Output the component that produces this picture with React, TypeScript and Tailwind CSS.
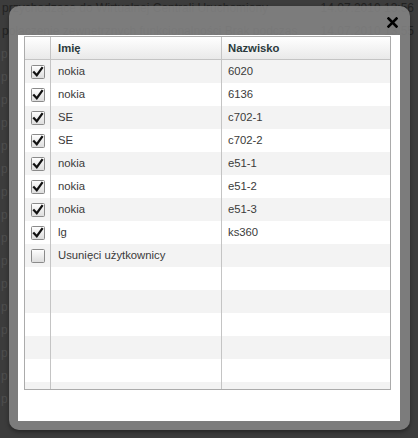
import React from "react";

const rows: [string, string, boolean][] = [
  ["nokia", "6020", true],
  ["nokia", "6136", true],
  ["SE", "c702-1", true],
  ["SE", "c702-2", true],
  ["nokia", "e51-1", true],
  ["nokia", "e51-2", true],
  ["nokia", "e51-3", true],
  ["lg", "ks360", true],
  ["Usunięci użytkownicy", "", false],
];

const topLines = [
  ["przychodzące do Wirtualnej Centrali   Uruchomiony", "14.07.2010 13:56"],
  ["połączenie zewnętrznych funkcjonalności   Brak podczas", "14.07.2010 13:55"],
];

function Check({ checked }: { checked: boolean }) {
  return (
    <svg width="14" height="14" viewBox="0 0 14 14">
      <defs>
        <linearGradient id="cbg" x1="0" y1="0" x2="0" y2="1">
          <stop offset="0" stopColor="#ffffff" />
          <stop offset="1" stopColor="#dcdcdc" />
        </linearGradient>
      </defs>
      <rect x="0.5" y="0.5" width="13" height="13" rx="1" fill="url(#cbg)" stroke="#8a8a8a" />
      {checked && (
        <path d="M3 7.2 L5.8 10.2 L11 3" fill="none" stroke="#111" strokeWidth="2.2" strokeLinecap="square" strokeLinejoin="miter" />
      )}
    </svg>
  );
}

export default function App() {
  const bodyRows = Array.from({ length: 16 }, (_, i) => rows[i] ?? null);
  return (
    <div
      className="relative w-[418px] h-[438px] overflow-hidden bg-[#3c3c3c] text-[11.3px]"
      style={{ fontFamily: '"Liberation Sans", Arial, sans-serif' }}
    >
      <div className="flex flex-col -mt-[4px]">
        {topLines.map((l, i) => (
          <div key={i} className="h-[23px] flex items-center gap-[14px] text-[#222] text-[12px] pl-[2px] whitespace-nowrap">
            <span>{l[0]}</span>
            <span className="ml-auto pr-[4px]">{l[1]}</span>
          </div>
        ))}
        {Array.from({ length: 16 }, (_, i) => (
          <div key={i} className="h-[23px] w-[12px] flex items-center text-[#4e4e4e] text-[12px] pl-[1px]">
            p
          </div>
        ))}
      </div>

      <div className="absolute left-[9px] top-[6px] w-[401px] h-[424px] rounded-[10px] bg-[rgba(135,135,135,0.86)] pt-[29px] pl-[9px] pr-[10px] pb-[9px] shadow-[0_2px_4px_rgba(0,0,0,0.4)]">
        <button className="absolute right-[12px] top-[10px] w-[12px] h-[12px] flex items-center justify-center">
          <svg width="11" height="11" viewBox="0 0 11 11">
            <path d="M1.5 1.5 L9.5 9.5 M9.5 1.5 L1.5 9.5" stroke="#000" strokeWidth="2.6" strokeLinecap="square" />
          </svg>
        </button>
        <div className="w-full h-full bg-white pt-[1px] pl-[6px] pr-[9px] pb-[31px]">
          <div className="w-full h-full border border-[#ababab] overflow-hidden flex flex-col">
            <div className="grid grid-cols-[25px_171px_1fr] h-[23px] shrink-0 border-b border-[#c4c4c4] bg-gradient-to-b from-white to-[#e9e9e9]">
              <div />
              <div className="border-l border-[#c4c4c4] pl-[7px] flex items-center font-bold text-[#2b3a3c]">Imię</div>
              <div className="border-l border-[#c4c4c4] pl-[6px] flex items-center font-bold text-[#2b3a3c]">Nazwisko</div>
            </div>
            {bodyRows.map((r, i) => (
              <div
                key={i}
                className={`grid grid-cols-[25px_171px_1fr] h-[23px] shrink-0 ${i % 2 === 0 ? "bg-[#f3f3f3]" : "bg-white"}`}
              >
                <div className="flex items-center justify-center">
                  {r && <Check checked={r[2]} />}
                </div>
                <div className="border-l border-[#c4c4c4] pl-[7px] flex items-center text-[#3a3a3a] whitespace-nowrap">
                  {r ? r[0] : ""}
                </div>
                <div className="border-l border-[#c4c4c4] pl-[6px] flex items-center text-[#3a3a3a]">
                  {r ? r[1] : ""}
                </div>
              </div>
            ))}
          </div>
        </div>
      </div>
    </div>
  );
}
